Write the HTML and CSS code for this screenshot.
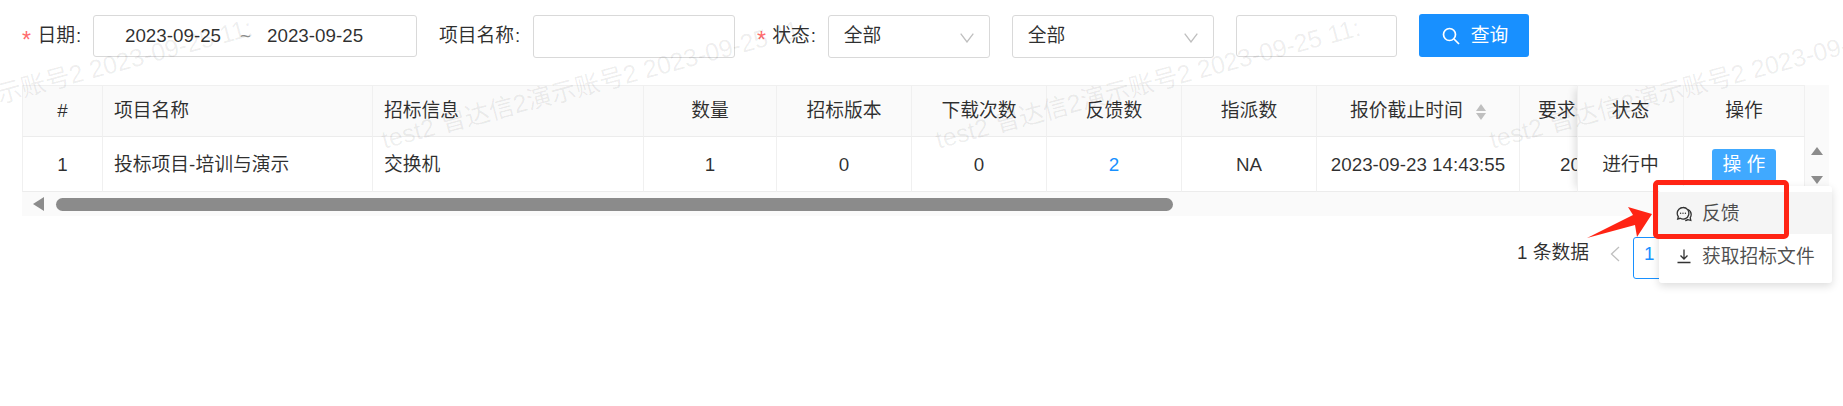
FILE: index.html
```html
<!DOCTYPE html>
<html>
<head>
    <meta charset="utf-8">
    <link rel="stylesheet" href="styles.css">
</head>
<body>
    <div class="searchForm">
        <div class="formItem">
            <span class="reqStar">*</span><span>日期</span><span class="colon">:</span>
            <div class="inputBox dateBox">
                <span>2023-09-25</span><span class="tilde">~</span><span>2023-09-25</span>
            </div>
        </div>
        <div class="formItem">
            <span>项目名称</span><span class="colon colonWide">:</span>
            <div class="inputBox nameBox"></div>
        </div>
        <div class="formItem">
            <span class="reqStar">*</span><span>状态</span><span class="colon">:</span>
            <div class="inputBox selectBox statusBox">
                <span>全部</span>
                <svg class="chevron" viewBox="0 0 14 10"><path d="M.7.7 7 9 13.3.7"/></svg>
            </div>
        </div>
        <div class="formItem">
            <div class="inputBox selectBox typeBox">
                <span>全部</span>
                <svg class="chevron" viewBox="0 0 14 10"><path d="M.7.7 7 9 13.3.7"/></svg>
            </div>
        </div>
        <div class="formItem">
            <div class="inputBox otherBox"></div>
        </div>
        <button class="searchBtn">
            <svg class="searchIcon" viewBox="0 0 18 18"><circle cx="7.5" cy="7.5" r="6"/><path d="m12 12 5 5"/></svg>
            <span>查询</span>
        </button>
    </div>

    <div class="tableWrap">
        <div class="tableMain">
            <div class="tableArea">
                <table class="dataTable">
                    <colgroup>
                        <col class="colNo"><col class="colName"><col class="colInfo"><col class="colQty">
                        <col class="colStd"><col class="colStd"><col class="colStd"><col class="colStd">
                        <col class="colTime"><col class="colReq">
                    </colgroup>
                    <thead>
                        <tr>
                            <th>#</th>
                            <th class="alignLeft">项目名称</th>
                            <th class="alignLeft">招标信息</th>
                            <th>数量</th>
                            <th>招标版本</th>
                            <th>下载次数</th>
                            <th>反馈数</th>
                            <th>指派数</th>
                            <th class="sortHead">
                                报价截止时间
                                <span class="sorter"><i class="sortUp"></i><i class="sortDown"></i></span>
                            </th>
                            <th class="reqHead">要求</th>
                        </tr>
                    </thead>
                    <tbody>
                        <tr>
                            <td>1</td>
                            <td class="alignLeft">投标项目-培训与演示</td>
                            <td class="alignLeft">交换机</td>
                            <td>1</td>
                            <td>0</td>
                            <td>0</td>
                            <td class="linkCell">2</td>
                            <td>NA</td>
                            <td>2023-09-23 14:43:55</td>
                            <td class="reqCell">20</td>
                        </tr>
                    </tbody>
                </table>
                <table class="dataTable fixedTable">
                    <colgroup><col class="colState"><col class="colOp"></colgroup>
                    <thead>
                        <tr><th>状态</th><th>操作</th></tr>
                    </thead>
                    <tbody>
                        <tr>
                            <td>进行中</td>
                            <td class="opCell"><span class="opBtn">操 作</span></td>
                        </tr>
                    </tbody>
                </table>
            </div>
            <div class="vBar">
                <i class="vUp"></i>
                <i class="vDown"></i>
            </div>
        </div>
        <div class="hBar">
            <i class="hLeft"></i>
            <div class="hThumb"></div>
        </div>
    </div>

    <div class="pager">
        <span>1 条数据</span>
        <svg class="pagePrev" viewBox="0 0 10 16"><path d="M9 1 1.500 8 9 15"/></svg>
        <span class="pageNum">1</span>
    </div>

    <div class="wmLayer">
        <span class="wmText wm1">test2 曾达信2演示账号2 2023-09-25 11:55</span>
        <span class="wmText wm2">test2 曾达信2演示账号2 2023-09-25 11:55</span>
        <span class="wmText wm3">test2 曾达信2演示账号2 2023-09-25 11:55</span>
        <span class="wmText wm4">test2 曾达信2演示账号2 2023-09-25 11:55</span>
    </div>

    <ul class="opMenu">
        <li class="opItem opHover">
            <svg class="opIcon" viewBox="0 0 18 18"><path d="M8 2.500a5.800 5.800 0 0 0-5.800 5.800c0 1.300.4 2.400 1.100 3.400l-.6 2.300 2.500-.7a5.800 5.800 0 1 0 2.800-10.800Z"/><path d="M13 4.500c2 .9 3.200 2.800 3.200 4.900 0 1.200-.4 2.300-1 3.200l.6 2.700-2.900-.7c-.8.500-1.700.8-2.700.9"/><path class="opDots" d="M5.600 8.300h.01M8 8.300h.01M10.400 8.300h.01"/></svg>
            <span>反馈</span>
        </li>
        <li class="opItem">
            <svg class="opIcon" viewBox="0 0 18 18"><path d="M9 2.500v9M5.500 8.500 9 12l3.500-3.500M2.500 15.500h13"/></svg>
            <span>获取招标文件</span>
        </li>
    </ul>

    <div class="redBox"></div>
    <svg class="redArrow" viewBox="0 0 70 36"><path d="M1 34 47 11 42 3 66 10 51 33 49 21Z"/></svg>
</body>
</html>
```

FILE: styles.css
```css
* {
    box-sizing: border-box;
}
html, body {
    margin: 0;
    height: 100%;
    overflow: hidden;
}
body {
    background-color: #fff;
    color: rgba(0, 0, 0, .82);
    font-family: "Liberation Sans", "Noto Sans CJK SC", sans-serif;
    font-size: 18.8px;
    line-height: 26px;
}

/* search form */
.searchForm {
    display: flex;
    align-items: flex-start;
    gap: 22px;
    padding: 15px 0 0 22px;
    height: 85px;
}
.formItem {
    display: flex;
    align-items: center;
    height: 42px;
    line-height: 40px;
}
.reqStar {
    width: 15.400px;
    margin-top: 8px;
    color: #ff6b6d;
    font-size: 23px;
}
.colon {
    width: 18px;
    padding-left: 1px;
}
.colonWide {
    width: 18.800px;
}
.inputBox {
    display: flex;
    align-items: center;
    height: 42px;
    border: 1px solid #d9d9d9;
    border-radius: 3px;
    background-color: #fff;
}
.dateBox {
    width: 324px;
    padding-left: 31px;
}
.tilde {
    width: 46px;
    padding-left: 19px;
    color: #8c8c8c;
}
.nameBox {
    width: 202px;
    height: 43px;
}
.selectBox {
    justify-content: space-between;
    padding: 0 15px 0 15px;
    height: 43px;
}
.statusBox {
    width: 162px;
}
.typeBox {
    width: 202px;
}
.otherBox {
    width: 161px;
}
.chevron {
    width: 14px;
    height: 10px;
    margin-top: 3px;
    fill: none;
    stroke: #bfbfbf;
    stroke-width: 1.300;
}
.searchBtn {
    display: flex;
    align-items: center;
    width: 110px;
    height: 43px;
    margin-top: -1px;
    padding: 0 0 0 23px;
    border: 0;
    border-radius: 3px;
    background-color: #1890ff;
    color: #fff;
    font: inherit;
}
.searchIcon {
    width: 18px;
    height: 18px;
    margin-right: 11px;
    fill: none;
    stroke: #fff;
    stroke-width: 1.700;
}

/* table */
.tableWrap {
    width: 1807px;
    margin-left: 22px;
}
.tableMain {
    display: flex;
    height: 107px;
}
.tableArea {
    position: relative;
    width: 1783px;
    overflow: hidden;
}
.dataTable {
    table-layout: fixed;
    border-collapse: separate;
    border-spacing: 0;
    width: 1678px;
}
.colNo { width: 81px; }
.colName { width: 270px; }
.colInfo { width: 271px; }
.colQty { width: 133px; }
.colStd { width: 135px; }
.colTime { width: 203px; }
.colReq { width: 180px; }
.colState { width: 107px; }
.colOp { width: 121px; }

.dataTable th, .dataTable td {
    padding: 0;
    text-align: center;
    white-space: nowrap;
    overflow: hidden;
    border-right: 1px solid #f0f0f0;
    border-bottom: 1px solid #ececec;
    font-weight: normal;
}
.dataTable th:first-child, .dataTable td:first-child {
    border-left: 1px solid #f0f0f0;
}
.dataTable th {
    height: 52px;
    border-top: 1px solid #f0f0f0;
    background-color: #fafafa;
}
.dataTable td {
    height: 55px;
    padding-top: 2px;
    background-color: #fff;
}
.dataTable .alignLeft {
    padding-left: 11px;
    text-align: left;
}
.dataTable .reqHead {
    padding-left: 18px;
    text-align: left;
}
.dataTable .reqCell {
    padding-left: 40px;
    text-align: left;
}
.linkCell {
    color: #1890ff;
}
.sorter {
    display: inline-flex;
    flex-direction: column;
    gap: 2px;
    margin-left: 8px;
    vertical-align: middle;
}
.sortUp, .sortDown {
    width: 0;
    height: 0;
    border-left: 5.500px solid transparent;
    border-right: 5.500px solid transparent;
}
.sortUp {
    border-bottom: 7px solid #bfbfbf;
}
.sortDown {
    border-top: 7px solid #bfbfbf;
}

.fixedTable {
    position: absolute;
    top: 0;
    right: 0;
    width: 228px;
    box-shadow: -6px 0 8px -4px rgba(0, 0, 0, .13);
}
.opBtn {
    display: inline-block;
    width: 64px;
    height: 33px;
    border-radius: 3px;
    background-color: #40a9ff;
    color: #fff;
    line-height: 31px;
}

.vBar {
    position: relative;
    width: 24px;
    background-color: #fafafa;
}
.vUp, .vDown {
    position: absolute;
    left: 6px;
    width: 0;
    height: 0;
    border-left: 6px solid transparent;
    border-right: 6px solid transparent;
}
.vUp {
    top: 62px;
    border-bottom: 8px solid #8c8c8c;
}
.vDown {
    top: 91px;
    border-top: 8px solid #8c8c8c;
}
.hBar {
    display: flex;
    align-items: center;
    height: 24px;
    padding: 0 0 0 11px;
    background-color: #fafafa;
}
.hLeft {
    width: 0;
    height: 0;
    border-top: 7px solid transparent;
    border-bottom: 7px solid transparent;
    border-right: 11px solid #8c8c8c;
}
.hThumb {
    width: 1117px;
    height: 13px;
    margin-left: 12px;
    border-radius: 7px;
    background-color: #8b8b8b;
}

/* pager */
.pager {
    display: flex;
    align-items: flex-start;
    justify-content: flex-end;
    height: 42px;
    margin-top: 21px;
    padding-right: 168px;
    line-height: 32px;
}
.pagePrev {
    width: 10px;
    height: 16px;
    margin: 9px 13px 0 21px;
    fill: none;
    stroke: #bfbfbf;
    stroke-width: 1.300;
}
.pageNum {
    width: 42px;
    height: 42px;
    border: 1px solid #1890ff;
    border-radius: 3px;
    padding-left: 10px;
    color: #1890ff;
}

/* watermark */
.wmLayer {
    position: absolute;
    top: 0;
    left: 0;
    width: 100%;
    height: 100%;
    overflow: hidden;
    pointer-events: none;
}
.wmText {
    position: absolute;
    top: 124px;
    width: 438px;
    overflow: hidden;
    transform: rotate(-15deg);
    transform-origin: 0 50%;
    white-space: nowrap;
    color: rgba(0, 0, 0, .07);
    font-size: 25px;
    line-height: 32px;
}
.wm1 { left: -172px; }
.wm2 { left: 382px; }
.wm3 { left: 936px; }
.wm4 { left: 1490px; width: 560px; }

/* row menu */
.opMenu {
    position: absolute;
    top: 186px;
    left: 1659px;
    width: 173px;
    height: 97px;
    margin: 0;
    padding: 6px 0 0 0;
    list-style: none;
    border-radius: 3px;
    background-color: #fff;
    box-shadow: 0 3px 9px rgba(0, 0, 0, .14);
    color: rgba(0, 0, 0, .7);
}
.opItem {
    display: flex;
    align-items: center;
    height: 43px;
    padding: 2px 0 0 16px;
}
.opHover {
    height: 42px;
    background-color: #f5f5f5;
}
.opIcon {
    width: 18px;
    height: 18px;
    margin: -1px 9px 0 0;
    fill: none;
    stroke: #333;
    stroke-width: 1.300;
}
.opDots {
    stroke-width: 1.400;
    stroke-linecap: round;
}

/* annotation */
.redBox {
    position: absolute;
    top: 180px;
    left: 1653px;
    width: 136px;
    height: 59px;
    border: 5px solid #ff2414;
    border-radius: 5px;
}
.redArrow {
    position: absolute;
    top: 204px;
    left: 1586px;
    width: 70px;
    height: 36px;
    fill: #ff2414;
}
```
